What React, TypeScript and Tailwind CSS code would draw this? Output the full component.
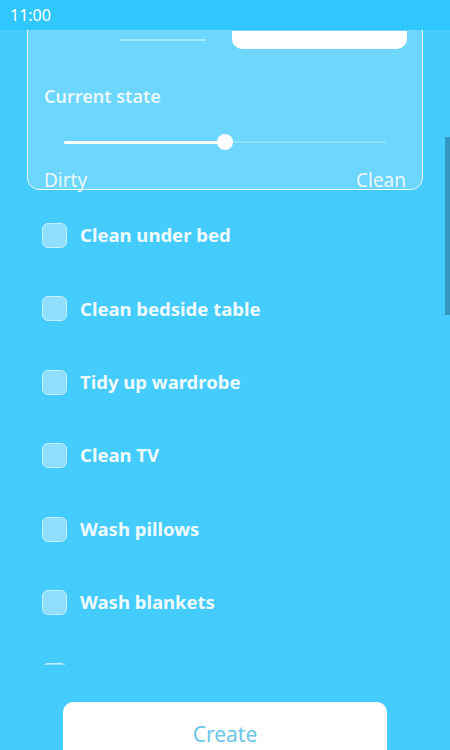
import React from "react";

const tasks = [
  "Clean under bed",
  "Clean bedside table",
  "Tidy up wardrobe",
  "Clean TV",
  "Wash pillows",
  "Wash blankets",
];

export default function App() {
  return (
    <div
      className="relative w-[450px] h-[750px] overflow-hidden bg-[#45ccff] flex flex-col"
      style={{ fontFamily: '"Noto Sans", "Open Sans", sans-serif' }}
    >
      {/* status bar */}
      <div className="h-[30px] shrink-0 bg-[#2fc7fd] flex items-center px-[10px] z-10">
        <span className="text-white text-[16px] leading-none">11:00</span>
      </div>

      {/* scroll area */}
      <div className="relative h-[635px] shrink-0 overflow-hidden">
        <div className="mt-[-60px] px-[27px]">
          <div className="rounded-[12px] border-[1.5px] border-[#e8f9ff] bg-[#6dd6fe] h-[220px] flex flex-col">
            <div className="flex items-start pt-[60px] h-[78px] shrink-0">
              <div className="w-[92px]" />
              <div className="w-[86px] h-[2px] mt-[8px] bg-[#a6e6fd]" />
              <div className="w-[26px]" />
              <div className="w-[175px] h-[18px] bg-white rounded-b-[10px]" />
            </div>
            <div className="pl-[16px] mt-[35px] text-[18px] font-semibold text-[#e8f8ff] leading-[24px] shrink-0">
              Current state
            </div>
            <div className="relative h-[2px] mt-[33px] mx-[36px] shrink-0">
              <div className="absolute inset-0 bg-[#8fdffd]" />
              <div className="absolute left-0 top-[-0.5px] h-[3px] w-[161px] bg-white rounded-full" />
              <div className="absolute left-[153px] top-[-7px] w-[16px] h-[16px] rounded-full bg-white" />
            </div>
            <div className="flex justify-between px-[16px] mt-[25px] text-[19px] leading-[24px] text-[#e8f8ff] shrink-0">
              <span>Dirty</span>
              <span>Clean</span>
            </div>
          </div>

          <div className="flex flex-col mt-[33px] pl-[15px]">
            {tasks.map((t) => (
              <div key={t} className="h-[73.4px] flex items-start">
                <div className="flex items-center gap-[13px] h-[25px]">
                  <div className="w-[25px] h-[25px] rounded-[6px] border-[1.5px] border-[#c3efff] bg-[#8fdefd]" />
                  <span className="text-[18.5px] font-bold text-[#f0fbff] leading-none">{t}</span>
                </div>
              </div>
            ))}
            <div className="h-[73.4px] flex items-start">
              <div className="w-[25px] h-[25px] rounded-[6px] border-[1.5px] border-[#c3efff] bg-[#8fdefd]" />
            </div>
          </div>
        </div>
      </div>

      {/* footer */}
      <div className="flex-1 flex justify-center pt-[37px]">
        <div className="w-[324px] h-[60px] bg-white rounded-[10px] flex justify-center pt-[22px]">
          <span className="text-[21px] text-[#6cc6e8] leading-none">Create</span>
        </div>
      </div>

      {/* scrollbar */}
      <div className="absolute right-0 top-[137px] w-[5px] h-[178px] bg-[#3597c1]" />
    </div>
  );
}
